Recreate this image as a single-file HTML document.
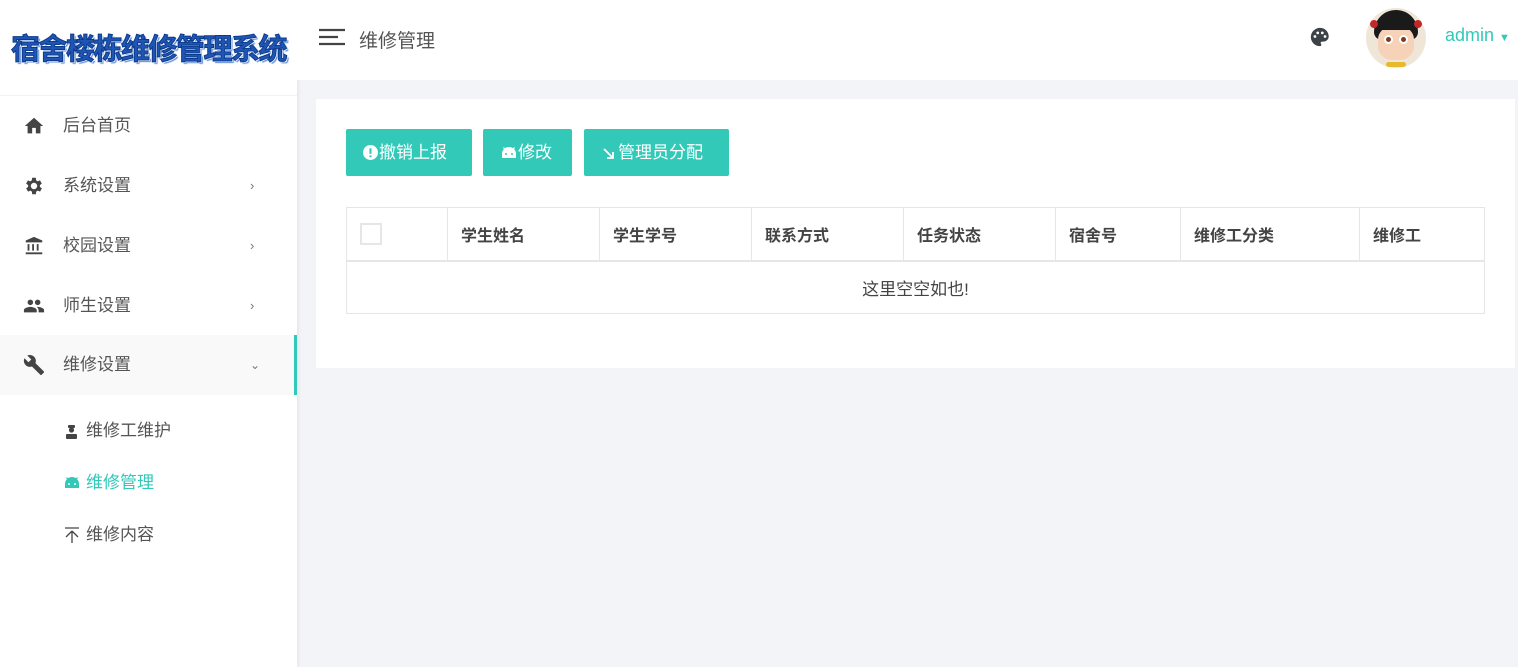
<!DOCTYPE html>
<html><head><meta charset="utf-8"><style>
*{margin:0;padding:0;box-sizing:border-box}
body{width:1518px;height:667px;overflow:hidden;background:#f3f4f8;font-family:"Liberation Sans","Noto Sans CJK SC",sans-serif;position:relative;color:#555}
.abs{position:absolute}
#side{left:0;top:0;width:297px;height:667px;background:#fff;box-shadow:1px 0 4px rgba(0,0,0,.08)}
.logo{left:3px;top:26px;width:291px;text-align:center;font-size:29px;font-weight:bold;color:#1f56b5;letter-spacing:-1.5px;white-space:nowrap;-webkit-text-stroke:1px #0d3b8c;text-shadow:1px 1px 0 #fff,-1px -1px 0 #fff,2px 2px 1px #5d8ad6}
.nav{left:0;width:297px;height:60px;font-size:17px;color:#555;line-height:60px}
.nav .t{position:absolute;left:63px}
.nav .ic{position:absolute;left:22px;top:19px;width:24px;height:22px}
.nav .ar{position:absolute;left:250px;color:#777;font-size:13px}
.sub{font-size:17px;line-height:20px;color:#555}
#hdr{left:297px;top:0;width:1221px;height:80px;background:#fff}
.card{left:316px;top:99px;width:1199px;height:269px;background:#fff}
.btn{top:129px;height:47px;background:#33c9b9;color:#fff;font-size:17px;line-height:47px;border-radius:2px}
.btn svg{position:absolute}
.btn span{position:absolute}
table{position:absolute;left:346px;top:207px;width:1139px;border-collapse:collapse;font-size:16px}
th{height:53px;border:1px solid #e6e6e6;border-bottom:2px solid #e6e6e6;text-align:left;padding-left:13px;color:#444;font-weight:bold}
td{height:53px;border:1px solid #e6e6e6;text-align:center;color:#444;font-size:17px}
</style></head><body>
<div id="side" class="abs">
<div class="logo abs">宿舍楼栋维修管理系统</div>
<div class="abs" style="left:0;top:95px;width:297px;height:1px;background:#f2f2f2"></div>
<div class="nav abs" style="top:96px"><svg class="ic" viewBox="0 0 24 24"><path fill="#444" d="M10 20v-6h4v6h5v-8h3L12 3 2 12h3v8z"/></svg><span class="t">后台首页</span></div>
<div class="nav abs" style="top:156px"><svg class="ic" viewBox="0 0 24 24"><path fill="#444" d="M19.4 13a7.5 7.5 0 000-2l2.1-1.6-2-3.5-2.5 1a7 7 0 00-1.7-1L15 3h-4l-.4 2.9a7 7 0 00-1.7 1l-2.5-1-2 3.5L6.6 11a7.5 7.5 0 000 2l-2.1 1.6 2 3.5 2.5-1a7 7 0 001.7 1L11 21h4l.4-2.9a7 7 0 001.7-1l2.5 1 2-3.5zM13 15.5a3.5 3.5 0 110-7 3.5 3.5 0 010 7z" transform="translate(-1 0)"/></svg><span class="t">系统设置</span><span class="ar">›</span></div>
<div class="nav abs" style="top:216px"><svg class="ic" viewBox="0 0 24 24"><path fill="#444" d="M12 2L3 6v2h18V6zM5 10v7h2v-7zm5 0v7h2v-7zm5 0v7h2v-7zM3 19v2h18v-2z"/></svg><span class="t">校园设置</span><span class="ar">›</span></div>
<div class="nav abs" style="top:276px"><svg class="ic" viewBox="0 0 24 24"><path fill="#444" d="M16 11a3 3 0 100-6 3 3 0 000 6zm-8 0a3 3 0 100-6 3 3 0 000 6zm0 2c-2.3 0-7 1.2-7 3.5V19h14v-2.5C15 14.2 10.3 13 8 13zm8 0c-.3 0-.6 0-1 .1 1.2.8 2 2 2 3.4V19h6v-2.5c0-2.3-4.7-3.5-7-3.5z"/></svg><span class="t">师生设置</span><span class="ar">›</span></div>
<div class="nav abs" style="top:335px;background:#f9f9f9;border-right:3px solid #33c9b9"><svg class="ic" viewBox="0 0 24 24"><path fill="#444" d="M22.7 19l-9.1-9.1c.9-2.3.4-5-1.5-6.9-2-2-5-2.4-7.4-1.3L9 6 6 9 1.6 4.7C.4 7.1.9 10.1 2.9 12.1c1.9 1.9 4.6 2.4 6.9 1.5l9.1 9.1c.4.4 1 .4 1.4 0l2.3-2.3c.5-.4.5-1.1.1-1.4z"/></svg><span class="t">维修设置</span><span class="ar" style="left:250px;font-size:12px">⌄</span></div>
<svg class="abs" style="left:65px;top:424px" width="13" height="15" viewBox="0 0 13 15"><rect x="3" y="1" width="7" height="3" rx="1" fill="#444"/><circle cx="6.5" cy="6" r="2.6" fill="#444"/><rect x="1" y="10" width="11" height="5" rx="1" fill="#444"/></svg>
<div class="sub abs" style="top:421px;left:86px">维修工维护</div>
<svg class="abs" style="left:64px;top:477px" width="16" height="11" viewBox="0 0 16 11"><path fill="#33c9b9" d="M1 11V7a7 7 0 0114 0v4z"/><path d="M2.5 0.5l2.5 3M13.5 0.5l-2.5 3" stroke="#33c9b9" stroke-width="1.3"/><circle cx="5" cy="7" r="1" fill="#fff"/><circle cx="11" cy="7" r="1" fill="#fff"/></svg>
<div class="sub abs" style="top:473px;left:86px;color:#33c9b9">维修管理</div>
<svg class="abs" style="left:65px;top:527px" width="14" height="16" viewBox="0 0 14 16"><path d="M0 1h14M7 4v12M7 4l-6 6M7 4l6 6" stroke="#444" stroke-width="1.3" fill="none"/></svg>
<div class="sub abs" style="top:525px;left:86px">维修内容</div>
</div>
<div id="hdr" class="abs">
<svg class="abs" style="left:22px;top:28px" width="26" height="20"><path d="M0 2h26M0 9h19M0 16h26" stroke="#444" stroke-width="2.2"/></svg>
<div class="abs" style="left:62px;top:26px;font-size:19px;color:#555">维修管理</div>
<svg class="abs" style="left:1012px;top:26px" width="22" height="22" viewBox="0 0 24 24"><path fill="#3d4148" d="M12 2C6.5 2 2 6.5 2 12s4.5 10 10 10c.9 0 1.5-.7 1.5-1.5 0-.4-.2-.8-.4-1-.2-.3-.4-.6-.4-1 0-.8.7-1.5 1.5-1.5H16c3 0 5.5-2.5 5.5-5.5C21.5 6 17.2 2 12 2zM6.5 13a1.5 1.5 0 110-3 1.5 1.5 0 010 3zm3-4a1.5 1.5 0 110-3 1.5 1.5 0 010 3zm5 0a1.5 1.5 0 110-3 1.5 1.5 0 010 3zm3 4a1.5 1.5 0 110-3 1.5 1.5 0 010 3z"/></svg>
<div class="abs" style="left:1069px;top:8px;width:60px;height:60px;border-radius:50%;background:#efe6d8;overflow:hidden">
<div class="abs" style="left:8px;top:2px;width:44px;height:30px;background:#1a1a1a;border-radius:22px 22px 8px 8px"></div>
<div class="abs" style="left:12px;top:18px;width:36px;height:34px;background:#f6d2b8;border-radius:40%"></div>
<div class="abs" style="left:12px;top:14px;width:36px;height:8px;background:#1a1a1a"></div>
<div class="abs" style="left:18px;top:27px;width:9px;height:9px;background:#7a3b1e;border-radius:50%;border:2px solid #fff"></div>
<div class="abs" style="left:33px;top:27px;width:9px;height:9px;background:#7a3b1e;border-radius:50%;border:2px solid #fff"></div>
<div class="abs" style="left:4px;top:12px;width:8px;height:8px;background:#c0282a;border-radius:50%"></div>
<div class="abs" style="left:48px;top:12px;width:8px;height:8px;background:#c0282a;border-radius:50%"></div>
<div class="abs" style="left:20px;top:54px;width:20px;height:5px;background:#e7b92b;border-radius:3px"></div>
</div>
<div class="abs" style="left:1148px;top:25px;font-size:18px;color:#33c9b9">admin <span style="font-size:11px">▼</span></div>
</div>
<div class="card abs"></div>
<div class="btn abs" style="left:346px;width:126px"><svg style="left:17px;top:16px" width="15" height="15" viewBox="0 0 16 16"><circle cx="8" cy="8" r="8" fill="#fff"/><path d="M8 3.5v6" stroke="#33c9b9" stroke-width="2.2"/><circle cx="8" cy="12" r="1.2" fill="#33c9b9"/></svg><span style="left:33px">撤销上报</span></div>
<div class="btn abs" style="left:483px;width:89px"><svg style="left:18px;top:18px" width="16" height="11" viewBox="0 0 16 11"><path fill="#fff" d="M1 11V7a7 7 0 0114 0v4z"/><path d="M2.5 0.5l2.5 3M13.5 0.5l-2.5 3" stroke="#fff" stroke-width="1.3"/><circle cx="5" cy="7" r="1" fill="#33c9b9"/><circle cx="11" cy="7" r="1" fill="#33c9b9"/></svg><span style="left:35px">修改</span></div>
<div class="btn abs" style="left:584px;width:145px"><svg style="left:19px;top:19px" width="12" height="12" viewBox="0 0 12 12"><path d="M1 1l9 9M4 10h6V4" stroke="#fff" stroke-width="1.8" fill="none"/></svg><span style="left:34px">管理员分配</span></div>
<table>
<tr><th style="width:101px"><span style="display:inline-block;width:22px;height:22px;border:2px solid #e6e6e6;vertical-align:middle"></span></th><th style="width:152px">学生姓名</th><th style="width:152px">学生学号</th><th style="width:152px">联系方式</th><th style="width:152px">任务状态</th><th style="width:125px">宿舍号</th><th style="width:179px">维修工分类</th><th>维修工</th></tr>
<tr><td colspan="8">这里空空如也!</td></tr>
</table>
</body></html>
